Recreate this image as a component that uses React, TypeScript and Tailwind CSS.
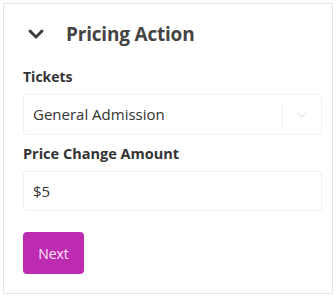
import React from 'react';
import { ChevronDown } from 'lucide-react';

const App: React.FC = () => {
  return (
    <div className="w-[336px] h-[296px] bg-white p-[3px]" style={{ fontFamily: '"Open Sans", "Noto Sans", sans-serif' }}>
      <div className="h-[291px] border border-[#e6e6e6] pl-[19px] pr-[10px] pt-[15px]">
        <div className="flex items-center h-[30px]">
          <ChevronDown size={24} strokeWidth={3} className="text-[#3d3d3d] ml-[1px]" />
          <h2 className="ml-[18px] text-[19px] font-bold text-[#444] leading-[30px] tracking-[-0.2px]">Pricing Action</h2>
        </div>

        <label className="block mt-[18px] text-[14px] font-bold text-[#333] leading-[20px]">Tickets</label>
        <div className="mt-[7px] h-[41px] border border-[#f0f0f0] rounded-[3px] flex items-center">
          <span className="flex-1 pl-[9px] text-[15px] text-[#333]">General Admission</span>
          <div className="w-px h-[26px] bg-[#f0f0f0]" />
          <div className="w-[38px] flex justify-center">
            <ChevronDown size={16} className="text-[#e8e8e8]" />
          </div>
        </div>

        <label className="block mt-[9px] text-[14.5px] font-bold text-[#333] leading-[20px]">Price Change Amount</label>
        <div className="mt-[7px] h-[40px] border border-[#f0f0f0] rounded-[3px] flex items-center pl-[9px] text-[15px] text-[#333]">
          $5
        </div>

        <button className="mt-[21px] w-[61px] h-[42px] rounded-[4px] bg-[#bd2bb0] text-[#fbe6f8] text-[14px]">Next</button>
      </div>
    </div>
  );
};

export default App;
